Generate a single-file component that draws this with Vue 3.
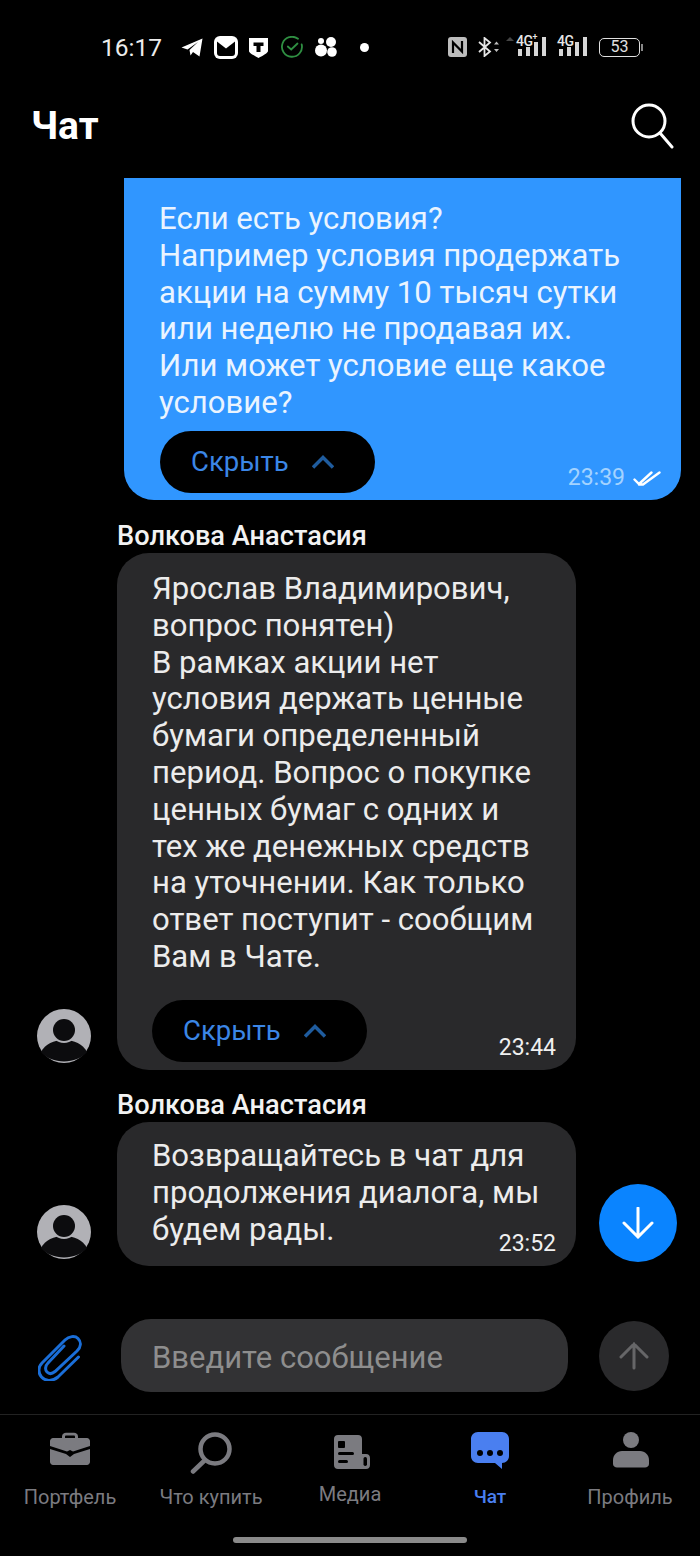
<template>
  <div class="phone">
    <div class="status">
      <span class="status__time">16:17</span>
      <svg class="ic-plane" width="22" height="19" viewBox="0 0 22 19"><path d="M0.5 9.5 21.5 0.5 18.5 18.5 12 14 9.5 17.5 8.5 12 17 4 6.5 11.5Z" fill="#fff" /></svg>
      <svg class="ic-mail" width="24" height="23" viewBox="0 0 24 23">
        <rect width="24" height="23" rx="6" fill="#fff" />
        <rect x="3" y="3" width="18" height="17" rx="3" fill="#000" />
        <path d="M3 3H21V5.5L12 12.5 3 5.5Z" fill="#fff" />
      </svg>
      <svg class="ic-shield" width="19" height="21" viewBox="0 0 19 21">
        <path d="M0 1H19V14C19 16 14 18.5 9.5 21 5 18.5 0 16 0 14Z" fill="#fff" />
        <path d="M4.5 5.5H14.5V9H11.5V15H7.5V9H4.5Z" fill="#000" />
      </svg>
      <svg class="ic-check" width="22" height="22" viewBox="0 0 22 22" fill="none" stroke="#2f8f42" stroke-width="1.8" stroke-linecap="round">
        <path d="M17 2.8A10 10 0 1 0 20.7 8.5" />
        <path d="M6.8 10.5 10.2 13.5 16.5 7.5" />
      </svg>
      <svg class="ic-dots" width="22" height="20" viewBox="0 0 22 20" fill="#fff">
        <circle cx="16" cy="5" r="5" />
        <circle cx="6" cy="13.5" r="6" />
        <circle cx="17" cy="15" r="4.8" />
        <circle cx="6" cy="4" r="3" />
      </svg>
      <span class="status__dot"></span>

      <div class="status__right">
        <svg width="19" height="20" viewBox="0 0 19 20">
          <rect width="19" height="20" rx="3" fill="#bdbdbd" />
          <path d="M5 16V5.5L14 14.5V4" fill="none" stroke="#000" stroke-width="2.2" />
        </svg>
        <svg class="ic-bt" width="22" height="20" viewBox="0 0 22 20" fill="none">
          <path d="M1 5 12 14.5 6.5 19V1L12 5.5 1 15" stroke="#e6e6e6" stroke-width="1.8" />
          <path d="M16 7.5 18.5 4.5 21 7.5ZM16 12 18.5 15 21 12Z" fill="#bdbdbd" />
        </svg>
        <div class="signal signal--plus">
          <span class="signal__arrows"></span>
          <span class="signal__label">4G<sup>+</sup></span>
          <i style="height: 7px"></i><i style="height: 9px"></i><i style="height: 14px"></i><i style="height: 19px"></i>
        </div>
        <div class="signal">
          <span class="signal__label">4G</span>
          <i style="height: 7px"></i><i style="height: 9px"></i><i style="height: 14px"></i><i style="height: 19px"></i>
        </div>
        <div class="battery"><span class="battery__body">53</span><span class="battery__tip"></span></div>
      </div>
    </div>

    <header class="header">
      <h1 class="header__title">Чат</h1>
      <svg class="header__search" width="44" height="46" viewBox="0 0 44 46" fill="none" stroke="#fff" stroke-width="3" stroke-linecap="round">
        <circle cx="18" cy="18" r="16" />
        <path d="M29 30 41 44" />
      </svg>
    </header>

    <main class="chat">
      <div class="bubble bubble--mine">
        <p class="bubble__text">Если есть условия?<br />Например условия продержать акции на сумму 10 тысяч сутки или неделю не продавая их.<br />Или может условие еще какое условие?</p>
        <button class="hide-btn hide-btn--mine">
          Скрыть
          <svg width="22" height="14" viewBox="0 0 22 14" fill="none" stroke="#1f5c9e" stroke-width="3.5"><path d="M1 12.5 11 2.5 21 12.5" /></svg>
        </button>
        <span class="bubble__time bubble__time--mine">
          23:39
          <svg width="28" height="15" viewBox="0 0 28 15" fill="none" stroke="#fff" stroke-width="2.4" stroke-linecap="round"><path d="M1.5 8.5 6 13 18.5 1.5M6 13.5H10L26.5 1.5" /></svg>
        </span>
      </div>

      <div class="msg">
        <div class="msg__name">Волкова Анастасия</div>
        <div class="msg__row">
          <svg class="avatar" width="54" height="54" viewBox="0 0 54 54">
            <circle cx="27" cy="27" r="27" fill="#b1b1b6" />
            <path d="M4 43C8 35 17 31 27 31 37 31 46 35 50 43 45 49 36 52.5 27 52.5 18 52.5 9 49 4 43Z" fill="#0c0c0e" />
            <circle cx="27" cy="21" r="13" fill="#b1b1b6" />
            <circle cx="27" cy="21" r="11" fill="#0c0c0e" />
          </svg>
          <div class="bubble bubble--other">
            <p class="bubble__text">Ярослав Владимирович, вопрос понятен)<br />В рамках акции нет условия держать ценные бумаги определенный период. Вопрос о покупке ценных бумаг с одних и тех же денежных средств на уточнении. Как только ответ поступит - сообщим Вам в Чате.</p>
            <button class="hide-btn">
              Скрыть
              <svg width="22" height="14" viewBox="0 0 22 14" fill="none" stroke="#1f5c9e" stroke-width="3.5"><path d="M1 12.5 11 2.5 21 12.5" /></svg>
            </button>
            <span class="bubble__time">23:44</span>
          </div>
        </div>
      </div>

      <div class="msg">
        <div class="msg__name">Волкова Анастасия</div>
        <div class="msg__row">
          <svg class="avatar" width="54" height="54" viewBox="0 0 54 54">
            <circle cx="27" cy="27" r="27" fill="#b1b1b6" />
            <path d="M4 43C8 35 17 31 27 31 37 31 46 35 50 43 45 49 36 52.5 27 52.5 18 52.5 9 49 4 43Z" fill="#0c0c0e" />
            <circle cx="27" cy="21" r="13" fill="#b1b1b6" />
            <circle cx="27" cy="21" r="11" fill="#0c0c0e" />
          </svg>
          <div class="bubble bubble--other bubble--short">
            <p class="bubble__text">Возвращайтесь в чат для продолжения диалога, мы будем рады.</p>
            <span class="bubble__time">23:52</span>
          </div>
        </div>
      </div>

      <button class="scroll-down">
        <svg width="32" height="32" viewBox="0 0 32 32" fill="none" stroke="#fff" stroke-width="3" stroke-linecap="round"><path d="M16 1V30M2 16 16 30 30 16" /></svg>
      </button>
    </main>

    <div class="composer">
      <svg class="composer__clip" width="44" height="48" viewBox="0 0 44 48" fill="none" stroke="#1a6ed8" stroke-width="3" stroke-linecap="round">
        <path d="M40.5 24 20 44C14 49 7 48 3.5 44 0 40 0 34 4 30L27 7C31 3 37 2.5 40 5.5 43.5 9 43 14 39 18L17 38.5C14 41 11 41 9 39 7 37 7 33 10 30L26 13" />
      </svg>
      <div class="composer__input">Введите сообщение</div>
      <button class="composer__send">
        <svg width="30" height="28" viewBox="0 0 30 28" fill="none" stroke="#666668" stroke-width="3" stroke-linecap="round"><path d="M15 26V2M2 15 15 2 28 15" /></svg>
      </button>
    </div>

    <nav class="tabs">
      <div class="tabs__row">
        <div v-for="tab in tabs" :key="tab.id" class="tab" :class="[`tab--${tab.id}`, { 'tab--active': tab.active }]">
          <div class="tab__icon">
            <svg v-if="tab.id === 'portfolio'" width="40" height="33" viewBox="0 0 40 33" fill="currentColor">
              <path d="M12 7V4.5C12 2 14 .8 16 .8H24C26 .8 28 2 28 4.5V7H25V4.5C25 4 24.5 3.5 24 3.5H16C15.5 3.5 15 4 15 4.5V7Z" />
              <path d="M3 6H37C38.5 6 40 7.5 40 9V14L23 19.5 20 18 17 19.5 0 14V9C0 7.5 1.5 6 3 6Z" />
              <path d="M0 17 16 22 20 25 24 22 40 17V30C40 31.5 38.5 33 37 33H3C1.5 33 0 31.5 0 30Z" />
            </svg>
            <svg v-else-if="tab.id === 'buy'" width="42" height="42" viewBox="0 0 42 42" fill="none" stroke="currentColor" stroke-width="4.5" stroke-linecap="round">
              <circle cx="25" cy="17" r="14.5" />
              <path d="M14 29 3 39.5" />
            </svg>
            <svg v-else-if="tab.id === 'media'" width="36" height="34" viewBox="0 0 36 34">
              <path d="M4 0H24C26.5 0 28 1.5 28 4V19H32C34.5 19 36 20.5 36 23V30C36 32.5 34.5 34 32 34H4C1.5 34 0 32.5 0 30V4C0 1.5 1.5 0 4 0Z" fill="currentColor" />
              <rect x="4" y="6" width="7" height="7" rx="1" fill="#000" />
              <rect x="4" y="17" width="16" height="3" rx="1.5" fill="#000" />
              <rect x="4" y="25" width="10" height="3" rx="1.5" fill="#000" />
              <rect x="29.5" y="22" width="3.5" height="9" rx="1.7" fill="#000" />
            </svg>
            <svg v-else-if="tab.id === 'chat'" width="38" height="37" viewBox="0 0 38 37">
              <path d="M7 0H31C35 0 38 3 38 7V24C38 28 35 31 31 31H31V37L24 31H7C3 31 0 28 0 24V7C0 3 3 0 7 0Z" fill="currentColor" />
              <circle cx="9" cy="21" r="3" fill="#000" /><circle cx="19" cy="21" r="3" fill="#000" /><circle cx="29" cy="21" r="3" fill="#000" />
            </svg>
            <svg v-else width="36" height="36" viewBox="0 0 36 36" fill="currentColor">
              <circle cx="18" cy="8" r="8" />
              <path d="M9 19H27C32 19 36 23 36 28V32C36 34 34 35.5 32 35.5H4C2 35.5 0 34 0 32V28C0 23 4 19 9 19Z" />
            </svg>
          </div>
          <span class="tab__label">{{ tab.label }}</span>
        </div>
      </div>
      <div class="tabs__home"></div>
    </nav>
  </div>
</template>

<script setup>
const tabs = [
  { id: 'portfolio', label: 'Портфель' },
  { id: 'buy', label: 'Что купить' },
  { id: 'media', label: 'Медиа' },
  { id: 'chat', label: 'Чат', active: true },
  { id: 'profile', label: 'Профиль' }
]
</script>

<style>
html, body {
  margin: 0;
  background: #000;
}
</style>

<style scoped>
.phone {
  display: flex;
  flex-direction: column;
  width: 700px;
  height: 1556px;
  overflow: hidden;
  background: #000;
  color: #fff;
  font-family: Roboto, "Liberation Sans", sans-serif;
}

.status {
  display: flex;
  align-items: center;
  height: 94px;
  padding: 0 57px 0 101px;
  box-sizing: border-box;
  flex-shrink: 0;
}
.status__time {
  width: 60px;
  font-size: 24.5px;
  color: #ececec;
  white-space: nowrap;
}
.ic-plane { margin-left: 20px; }
.ic-mail { margin-left: 11px; }
.ic-shield { margin-left: 11px; }
.ic-check { margin-left: 13px; }
.ic-dots { margin-left: 12px; }
.status__dot {
  width: 9px;
  height: 9px;
  margin-left: 23px;
  border-radius: 50%;
  background: #fff;
}
.status__right {
  display: flex;
  align-items: center;
  margin-left: auto;
}
.status__right > svg:first-child {
  margin-left: 1px;
}
.ic-bt { margin-left: 11px; }
.signal {
  position: relative;
  display: flex;
  align-items: flex-end;
  gap: 4px;
  height: 22px;
  margin-bottom: 4px;
}
.signal--plus { margin-left: 18px; }
.signal + .signal { margin-left: 13px; }
.signal i {
  display: block;
  width: 4px;
  background: #d6d6d6;
}
.signal__label {
  position: absolute;
  left: -2px;
  top: 0;
  font-size: 14px;
  font-weight: 500;
  line-height: 14px;
  letter-spacing: -0.5px;
  color: #e6e6e6;
}
.signal__label sup {
  font-size: 9px;
  line-height: 0;
}
.signal__arrows {
  position: absolute;
  left: -12px;
  top: -1px;
  width: 0;
  height: 0;
  border: 4px solid transparent;
  border-bottom-color: #444;
}
.battery {
  display: flex;
  align-items: center;
  margin-left: 12px;
}
.battery__body {
  width: 41px;
  height: 19px;
  box-sizing: border-box;
  border: 1.5px solid #e0e0e0;
  border-radius: 5px;
  font-size: 16px;
  line-height: 16px;
  text-align: center;
  color: #e0e0e0;
}
.battery__tip {
  width: 2px;
  height: 7px;
  margin-left: 1px;
  background: #888;
}

.header {
  display: flex;
  justify-content: space-between;
  align-items: flex-start;
  height: 84px;
  padding: 9px 25px 0 31px;
  box-sizing: border-box;
  flex-shrink: 0;
}
.header__title {
  margin: 0;
  padding-top: 2px;
  font-size: 39px;
  font-weight: 700;
  line-height: 42px;
}

.chat {
  position: relative;
  flex: 1;
  min-height: 0;
}
.bubble {
  position: relative;
  box-sizing: border-box;
}
.bubble--mine {
  width: 557px;
  height: 322px;
  margin-left: 124px;
  padding: 23px 35px 0;
  background: #3096ff;
  border-radius: 0 0 30px 30px;
}
.bubble--other {
  width: 459px;
  padding: 18px 35px 8px;
  background: #29292b;
  border-radius: 32px;
}
.bubble--short {
  height: 144px;
  padding-top: 16px;
}
.bubble__text {
  margin: 0;
  font-size: 31.1px;
  line-height: 36.8px;
  color: #ececec;
}
.bubble--mine .bubble__text {
  color: #eaf4ff;
}
.bubble__time {
  position: absolute;
  right: 20px;
  bottom: 9px;
  display: flex;
  align-items: center;
  gap: 8px;
  font-size: 23px;
  line-height: 26px;
  color: #f0f0f0;
}
.bubble__time--mine {
  color: #a4d3ff;
}

.hide-btn {
  display: flex;
  align-items: center;
  gap: 23px;
  width: 215px;
  height: 62px;
  margin-top: 24.2px;
  padding: 0 0 0 31px;
  box-sizing: border-box;
  border: 0;
  border-radius: 31px;
  background: #000;
  font-family: inherit;
  font-size: 27.5px;
  color: #3b86e6;
}
.hide-btn--mine {
  margin-top: 9.2px;
  margin-left: 1px;
}

.msg {
  margin-top: 21px;
}
.msg + .msg {
  margin-top: 20px;
}
.msg__name {
  height: 30px;
  margin: 0 0 2px 117px;
  font-size: 27.2px;
  font-weight: 500;
  line-height: 30px;
  color: #f2f2f2;
}
.msg__row {
  display: flex;
  align-items: flex-end;
  gap: 26px;
  padding-left: 37px;
}
.avatar {
  flex-shrink: 0;
  margin-bottom: 7px;
}
.scroll-down {
  position: absolute;
  right: 23px;
  top: 1006px;
  display: flex;
  align-items: center;
  justify-content: center;
  width: 78px;
  height: 78px;
  padding: 0;
  border: 0;
  border-radius: 50%;
  background: #0a84ff;
}

.composer {
  display: flex;
  align-items: center;
  height: 73px;
  margin-bottom: 22px;
  padding-left: 38px;
  flex-shrink: 0;
}
.composer__clip {
  flex-shrink: 0;
  margin-top: 3px;
}
.composer__input {
  width: 447px;
  height: 73px;
  margin-left: 39px;
  padding-left: 31px;
  box-sizing: border-box;
  border-radius: 30px;
  background: #323234;
  font-size: 31px;
  line-height: 78px;
  color: #8e8e8e;
}
.composer__send {
  display: flex;
  align-items: center;
  justify-content: center;
  width: 70px;
  height: 70px;
  margin-left: 31px;
  padding: 0;
  border: 0;
  border-radius: 50%;
  background: #2a2a2c;
}

.tabs {
  height: 142px;
  box-sizing: border-box;
  border-top: 1px solid #222;
  flex-shrink: 0;
}
.tabs__row {
  display: grid;
  grid-template-columns: repeat(5, 140px);
  height: 122px;
}
.tab {
  display: flex;
  flex-direction: column;
  align-items: center;
  padding-top: 16px;
  color: #7b7b80;
}
.tab--active {
  color: #4a7ff0;
}
.tab__icon {
  display: flex;
  justify-content: center;
  align-items: flex-start;
  height: 54px;
  box-sizing: border-box;
  padding-top: 1px;
}
.tab__label {
  font-size: 20px;
  line-height: 24px;
  white-space: nowrap;
}
.tab--active .tab__label {
  font-weight: 500;
  font-size: 19px;
}
.tab--buy { padding-left: 2px; }
.tab--media .tab__icon { padding: 4px 0 0 3px; height: 51px; }
.tab--profile .tab__icon { padding-left: 2px; }
.tabs__home {
  width: 234px;
  height: 6px;
  margin: 0 auto;
  border-radius: 3px;
  background: #8a8a8a;
}
</style>
